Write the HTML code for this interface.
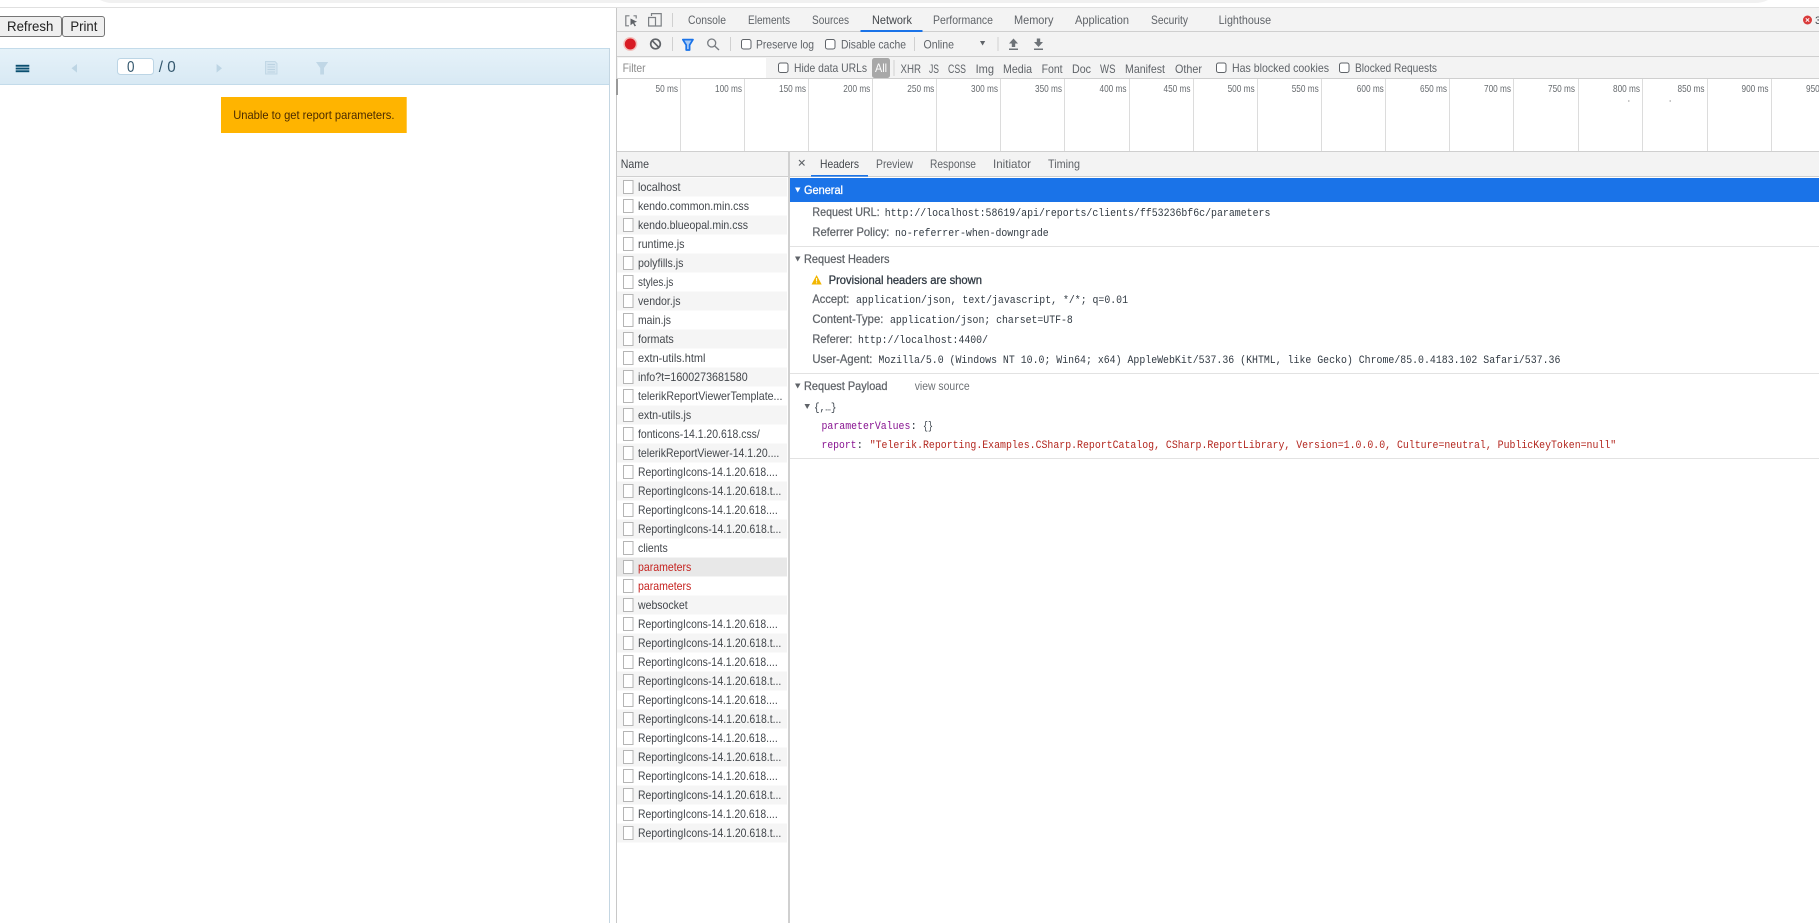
<!DOCTYPE html>
<html>
<head>
<meta charset="utf-8">
<title>Report Viewer</title>
<style>
html,body{margin:0;padding:0;background:#fff;width:1819px;height:923px;overflow:hidden}
svg{display:block;position:absolute;left:0;top:0}
text{font-family:"Liberation Sans",Arial,sans-serif;font-size:12px;fill:#5f6368;white-space:pre}
.d{fill:#43474c}
.l{fill:#5f6368;stroke:#5f6368;stroke-width:.25px;font-size:12px}
.m{font-family:"Liberation Mono",monospace;font-size:11px;fill:#303942}
.t{font-size:10.5px;fill:#666a6e}
.r{fill:#c5221f}
.p{font-family:"Liberation Mono",monospace;font-size:11px;fill:#881391}
.s{font-family:"Liberation Mono",monospace;font-size:11px;fill:#b3261e}
.cb{fill:#fff;stroke:#5f6368;stroke-width:1}
.ic{fill:#fff;stroke:#b5b5b5;stroke-width:1}
.g{stroke:#dcdcdc;stroke-width:1}
.dv{stroke:#d0d0d0;stroke-width:1}
</style>
</head>
<body>
<svg width="1819" height="923" viewBox="0 0 1819 923" xmlns="http://www.w3.org/2000/svg">
<defs>
<linearGradient id="tb" x1="0" y1="0" x2="0" y2="1"><stop offset="0" stop-color="#e6f2f9"/><stop offset="1" stop-color="#d8e9f4"/></linearGradient>
</defs>
<rect width="1819" height="923" fill="#fff"/>
<path d="M100 0 Q106 3 112 3 L1755 3 Q1762 3 1768 0 Z" fill="#f1f1f1"/>
<rect x="0" y="7" width="1819" height="1" fill="#e0e0e0"/>

<!-- left page -->
<rect x="-3" y="16.5" width="64.5" height="20" rx="2.5" fill="#efefef" stroke="#767676"/>
<rect x="62.5" y="16.5" width="42" height="20" rx="2.5" fill="#efefef" stroke="#767676"/>
<text x="7" y="31" textLength="46.4" lengthAdjust="spacingAndGlyphs" style="font-size:14px;fill:#222">Refresh</text>
<text x="70.4" y="31" textLength="27" lengthAdjust="spacingAndGlyphs" style="font-size:14px;fill:#222">Print</text>

<rect x="0" y="48" width="609" height="37" fill="url(#tb)"/>
<rect x="0" y="48" width="609" height="1" fill="#c3dbea"/>
<rect x="0" y="84" width="609" height="1" fill="#c3dbea"/>
<rect x="609" y="48" width="1" height="875" fill="#c4d6e2"/>
<rect x="15.7" y="64.8" width="13.6" height="1.9" fill="#0a4f70"/>
<rect x="15.7" y="67.6" width="13.6" height="1.9" fill="#0a4f70"/>
<rect x="15.7" y="70.3" width="13.6" height="1.9" fill="#0a4f70"/>
<path d="M77 64 L71.5 68.3 L77 72.6 Z" fill="#bdd5e4"/>
<rect x="117.5" y="58.5" width="36" height="16" rx="3" fill="#fff" stroke="#bcd5e5"/>
<text x="127" y="72" textLength="7.5" lengthAdjust="spacingAndGlyphs" style="font-size:16px;fill:#34586e">0</text>
<text x="158.8" y="72" textLength="17" lengthAdjust="spacingAndGlyphs" style="font-size:16px;fill:#34586e">/ 0</text>
<path d="M216.6 64 L222 68.3 L216.6 72.6 Z" fill="#bdd5e4"/>
<path d="M265.5 61.5 H275 L277 63.5 V74 H265.5 Z" fill="#d4e5f0" stroke="#c2d8e6"/>
<path d="M267.5 64.5 H275 M267.5 67 H275 M267.5 69.5 H275 M267.5 72 H275" stroke="#bcd3e2" fill="none"/>
<path d="M316 62 H328.2 L324 68 V74.5 H320.2 V68 Z" fill="#c0d7e6"/>

<rect x="221" y="97" width="185.7" height="36" fill="#ffb400"/>
<text x="233.2" y="119" textLength="161.3" lengthAdjust="spacingAndGlyphs" style="font-size:12px;fill:#4a2b00">Unable to get report parameters.</text>

<!-- devtools chrome -->
<rect x="616" y="8" width="1203" height="143.5" fill="#f3f3f3"/>
<rect x="616" y="8" width="1" height="915" fill="#c8c8c8"/>
<rect x="617" y="31" width="1202" height="1" fill="#cfcfcf"/>
<rect x="617" y="56" width="1202" height="1" fill="#cfcfcf"/>
<rect x="617" y="78" width="1202" height="1" fill="#cfcfcf"/>
<rect x="617" y="79" width="1202" height="72" fill="#fff"/>
<rect x="617" y="151" width="1202" height="1" fill="#cfcfcf"/>

<!-- tab bar icons -->
<path d="M629.5 15.8 H625.8 V25.8 H629 M633.5 15.8 H636.2 V18.5" fill="none" stroke="#7c8084" stroke-width="1.2"/>
<path d="M630.5 18.5 L637 21.8 L634.2 22.8 L636 25.8 L634.6 26.4 L633 23.4 L630.5 25.2 Z" fill="#5f6368"/>
<path d="M651.5 16 V13.6 H661.2 V26 H648.6 V17.5 H655.5 V26" fill="none" stroke="#7c8084" stroke-width="1.2"/>
<line x1="672.5" y1="13" x2="672.5" y2="27" class="dv"/>
<text x="688" y="24" textLength="38" lengthAdjust="spacingAndGlyphs">Console</text>
<text x="748" y="24" textLength="42" lengthAdjust="spacingAndGlyphs">Elements</text>
<text x="812" y="24" textLength="37" lengthAdjust="spacingAndGlyphs">Sources</text>
<text x="872" y="24" textLength="40" lengthAdjust="spacingAndGlyphs" class="d">Network</text>
<text x="933" y="24" textLength="60" lengthAdjust="spacingAndGlyphs">Performance</text>
<text x="1014" y="24" textLength="39.5" lengthAdjust="spacingAndGlyphs">Memory</text>
<text x="1075" y="24" textLength="54" lengthAdjust="spacingAndGlyphs">Application</text>
<text x="1151" y="24" textLength="37" lengthAdjust="spacingAndGlyphs">Security</text>
<text x="1218.6" y="24" textLength="52.5" lengthAdjust="spacingAndGlyphs">Lighthouse</text>
<rect x="860.5" y="30" width="62" height="2" fill="#1a73e8"/>
<circle cx="1807.5" cy="20" r="4.5" fill="#d93a3a"/>
<path d="M1805.8 18.3 L1809.2 21.7 M1809.2 18.3 L1805.8 21.7" stroke="#fff" stroke-width="1"/>
<text x="1815" y="24" class="d" style="font-size:11px">3</text>

<!-- network toolbar -->
<circle cx="630.3" cy="44" r="7" fill="#f3c0bc"/>
<circle cx="630.3" cy="44" r="5.5" fill="#d81b24"/>
<circle cx="655.5" cy="44" r="4.8" fill="none" stroke="#5f6368" stroke-width="1.7"/>
<line x1="652.2" y1="40.7" x2="658.8" y2="47.3" stroke="#5f6368" stroke-width="1.7"/>
<line x1="672.5" y1="37" x2="672.5" y2="51" class="dv"/>
<path d="M682.8 39.6 H693 L689.6 45 V50 H686.2 V45 Z" fill="#a9cbf5" stroke="#1a73e8" stroke-width="1.7" stroke-linejoin="round"/>
<circle cx="711.7" cy="43" r="4" fill="none" stroke="#777b80" stroke-width="1.3"/>
<line x1="714.7" y1="46" x2="719" y2="50" stroke="#777b80" stroke-width="1.4"/>
<line x1="730.5" y1="37" x2="730.5" y2="51" class="dv"/>
<rect x="741.5" y="39.5" width="9.5" height="9.5" rx="2" class="cb"/>
<text x="756" y="48.5" textLength="58" lengthAdjust="spacingAndGlyphs">Preserve log</text>
<rect x="825.5" y="39.5" width="9.5" height="9.5" rx="2" class="cb"/>
<text x="841" y="48.5" textLength="65" lengthAdjust="spacingAndGlyphs">Disable cache</text>
<line x1="914.5" y1="37" x2="914.5" y2="51" class="dv"/>
<text x="923.5" y="48.5" textLength="30.5" lengthAdjust="spacingAndGlyphs">Online</text>
<path d="M980 41 H985.2 L982.6 45.5 Z" fill="#5f6368"/>
<line x1="998" y1="37" x2="998" y2="51" class="dv"/>
<path d="M1013.5 38.5 L1018 43.5 H1015.2 V47 H1011.8 V43.5 H1009 Z M1009 48.5 H1018 V50 H1009 Z" fill="#6e7378"/>
<path d="M1038.5 47 L1043 42 H1040.2 V38.5 H1036.8 V42 H1034 Z M1034 48.5 H1043 V50 H1034 Z" fill="#6e7378"/>

<!-- filter bar -->
<rect x="618" y="58" width="148" height="20" fill="#fff"/>
<text x="622.6" y="72" textLength="23" lengthAdjust="spacingAndGlyphs" style="fill:#8a8a8a">Filter</text>
<rect x="778.5" y="63" width="9.5" height="9.5" rx="2" class="cb"/>
<text x="794" y="72" textLength="73" lengthAdjust="spacingAndGlyphs">Hide data URLs</text>
<rect x="872" y="58" width="18" height="20" rx="2.5" fill="#a8a8a8"/>
<text x="875" y="72" textLength="12" lengthAdjust="spacingAndGlyphs" style="fill:#fff">All</text>
<line x1="894" y1="60" x2="894" y2="76" class="dv"/>
<text x="900.5" y="73" textLength="20.5" lengthAdjust="spacingAndGlyphs">XHR</text>
<text x="929" y="73" textLength="10" lengthAdjust="spacingAndGlyphs">JS</text>
<text x="948" y="73" textLength="18" lengthAdjust="spacingAndGlyphs">CSS</text>
<text x="975.6" y="73" textLength="18.4" lengthAdjust="spacingAndGlyphs">Img</text>
<text x="1003" y="73" textLength="29" lengthAdjust="spacingAndGlyphs">Media</text>
<text x="1041.6" y="73" textLength="21" lengthAdjust="spacingAndGlyphs">Font</text>
<text x="1072" y="73" textLength="19" lengthAdjust="spacingAndGlyphs">Doc</text>
<text x="1100" y="73" textLength="15.5" lengthAdjust="spacingAndGlyphs">WS</text>
<text x="1125" y="73" textLength="40" lengthAdjust="spacingAndGlyphs">Manifest</text>
<text x="1175" y="73" textLength="27" lengthAdjust="spacingAndGlyphs">Other</text>
<rect x="1216.5" y="63" width="9.5" height="9.5" rx="2" class="cb"/>
<text x="1232" y="72" textLength="97" lengthAdjust="spacingAndGlyphs">Has blocked cookies</text>
<rect x="1339.5" y="63" width="9.5" height="9.5" rx="2" class="cb"/>
<text x="1355" y="72" textLength="82" lengthAdjust="spacingAndGlyphs">Blocked Requests</text>

<!-- timeline -->
<rect x="616" y="79" width="2" height="16" fill="#9a9a9a"/>
<g>
<line x1="680.5" y1="79" x2="680.5" y2="151" class="g"/><line x1="744.5" y1="79" x2="744.5" y2="151" class="g"/>
<line x1="808.5" y1="79" x2="808.5" y2="151" class="g"/><line x1="872.5" y1="79" x2="872.5" y2="151" class="g"/>
<line x1="936.5" y1="79" x2="936.5" y2="151" class="g"/><line x1="1000.5" y1="79" x2="1000.5" y2="151" class="g"/>
<line x1="1064.5" y1="79" x2="1064.5" y2="151" class="g"/><line x1="1129.5" y1="79" x2="1129.5" y2="151" class="g"/>
<line x1="1193.5" y1="79" x2="1193.5" y2="151" class="g"/><line x1="1257.5" y1="79" x2="1257.5" y2="151" class="g"/>
<line x1="1321.5" y1="79" x2="1321.5" y2="151" class="g"/><line x1="1385.5" y1="79" x2="1385.5" y2="151" class="g"/>
<line x1="1449.5" y1="79" x2="1449.5" y2="151" class="g"/><line x1="1513.5" y1="79" x2="1513.5" y2="151" class="g"/>
<line x1="1578.5" y1="79" x2="1578.5" y2="151" class="g"/><line x1="1642.5" y1="79" x2="1642.5" y2="151" class="g"/>
<line x1="1707.5" y1="79" x2="1707.5" y2="151" class="g"/><line x1="1771.5" y1="79" x2="1771.5" y2="151" class="g"/>
</g>
<text class="t" x="655.5" y="92" textLength="22.5" lengthAdjust="spacingAndGlyphs">50 ms</text>
<text class="t" x="715" y="92" textLength="27" lengthAdjust="spacingAndGlyphs">100 ms</text>
<text class="t" x="779" y="92" textLength="27" lengthAdjust="spacingAndGlyphs">150 ms</text>
<text class="t" x="843.3" y="92" textLength="27" lengthAdjust="spacingAndGlyphs">200 ms</text>
<text class="t" x="907.3" y="92" textLength="27" lengthAdjust="spacingAndGlyphs">250 ms</text>
<text class="t" x="971" y="92" textLength="27" lengthAdjust="spacingAndGlyphs">300 ms</text>
<text class="t" x="1035" y="92" textLength="27" lengthAdjust="spacingAndGlyphs">350 ms</text>
<text class="t" x="1099.5" y="92" textLength="27" lengthAdjust="spacingAndGlyphs">400 ms</text>
<text class="t" x="1163.5" y="92" textLength="27" lengthAdjust="spacingAndGlyphs">450 ms</text>
<text class="t" x="1227.6" y="92" textLength="27" lengthAdjust="spacingAndGlyphs">500 ms</text>
<text class="t" x="1291.7" y="92" textLength="27" lengthAdjust="spacingAndGlyphs">550 ms</text>
<text class="t" x="1356.8" y="92" textLength="27" lengthAdjust="spacingAndGlyphs">600 ms</text>
<text class="t" x="1420" y="92" textLength="27" lengthAdjust="spacingAndGlyphs">650 ms</text>
<text class="t" x="1484" y="92" textLength="27" lengthAdjust="spacingAndGlyphs">700 ms</text>
<text class="t" x="1548" y="92" textLength="27" lengthAdjust="spacingAndGlyphs">750 ms</text>
<text class="t" x="1613" y="92" textLength="27" lengthAdjust="spacingAndGlyphs">800 ms</text>
<text class="t" x="1677.5" y="92" textLength="27" lengthAdjust="spacingAndGlyphs">850 ms</text>
<text class="t" x="1741.5" y="92" textLength="27" lengthAdjust="spacingAndGlyphs">900 ms</text>
<text class="t" x="1806" y="92" textLength="27" lengthAdjust="spacingAndGlyphs">950 ms</text>
<rect x="1628" y="100" width="1.5" height="2" fill="#c8c8c8"/>
<rect x="1669.5" y="100" width="1.5" height="2" fill="#c8c8c8"/>

<!-- panels header -->
<rect x="617" y="152" width="1202" height="24.5" fill="#f3f3f3"/>
<rect x="617" y="176" width="1202" height="1" fill="#cfcfcf"/>
<rect x="788" y="151" width="2" height="772" fill="#d0d0d0"/>
<text x="620.7" y="168" textLength="28.3" lengthAdjust="spacingAndGlyphs" class="d">Name</text>
<path d="M799 160 L804.5 165.5 M804.5 160 L799 165.5" stroke="#5f6368" stroke-width="1.2"/>
<text x="820" y="168" textLength="39" lengthAdjust="spacingAndGlyphs" class="d">Headers</text>
<text x="876" y="168" textLength="37" lengthAdjust="spacingAndGlyphs">Preview</text>
<text x="930" y="168" textLength="46" lengthAdjust="spacingAndGlyphs">Response</text>
<text x="993" y="168" textLength="38" lengthAdjust="spacingAndGlyphs">Initiator</text>
<text x="1048" y="168" textLength="32" lengthAdjust="spacingAndGlyphs">Timing</text>
<rect x="811" y="175" width="57" height="1.6" fill="#1a73e8"/>

<!-- request rows backgrounds -->
<g fill="#f5f5f5">
<rect x="617" y="177.5" width="170" height="19"/><rect x="617" y="215.5" width="170" height="19"/>
<rect x="617" y="253.5" width="170" height="19"/><rect x="617" y="291.5" width="170" height="19"/>
<rect x="617" y="329.5" width="170" height="19"/><rect x="617" y="367.5" width="170" height="19"/>
<rect x="617" y="405.5" width="170" height="19"/><rect x="617" y="443.5" width="170" height="19"/>
<rect x="617" y="481.5" width="170" height="19"/><rect x="617" y="519.5" width="170" height="19"/>
<rect x="617" y="557.5" width="170" height="19" fill="#e8e8e8"/><rect x="617" y="595.5" width="170" height="19"/>
<rect x="617" y="633.5" width="170" height="19"/><rect x="617" y="671.5" width="170" height="19"/>
<rect x="617" y="709.5" width="170" height="19"/><rect x="617" y="747.5" width="170" height="19"/>
<rect x="617" y="785.5" width="170" height="19"/><rect x="617" y="823.5" width="170" height="19"/>
</g>
<!-- file icons -->
<g class="ic">
<rect x="623.5" y="180.5" width="9.5" height="13"/><rect x="623.5" y="199.5" width="9.5" height="13"/>
<rect x="623.5" y="218.5" width="9.5" height="13"/><rect x="623.5" y="237.5" width="9.5" height="13"/>
<rect x="623.5" y="256.5" width="9.5" height="13"/><rect x="623.5" y="275.5" width="9.5" height="13"/>
<rect x="623.5" y="294.5" width="9.5" height="13"/><rect x="623.5" y="313.5" width="9.5" height="13"/>
<rect x="623.5" y="332.5" width="9.5" height="13"/><rect x="623.5" y="351.5" width="9.5" height="13"/>
<rect x="623.5" y="370.5" width="9.5" height="13"/><rect x="623.5" y="389.5" width="9.5" height="13"/>
<rect x="623.5" y="408.5" width="9.5" height="13"/><rect x="623.5" y="427.5" width="9.5" height="13"/>
<rect x="623.5" y="446.5" width="9.5" height="13"/><rect x="623.5" y="465.5" width="9.5" height="13"/>
<rect x="623.5" y="484.5" width="9.5" height="13"/><rect x="623.5" y="503.5" width="9.5" height="13"/>
<rect x="623.5" y="522.5" width="9.5" height="13"/><rect x="623.5" y="541.5" width="9.5" height="13"/>
<rect x="623.5" y="560.5" width="9.5" height="13"/><rect x="623.5" y="579.5" width="9.5" height="13"/>
<rect x="623.5" y="598.5" width="9.5" height="13"/><rect x="623.5" y="617.5" width="9.5" height="13"/>
<rect x="623.5" y="636.5" width="9.5" height="13"/><rect x="623.5" y="655.5" width="9.5" height="13"/>
<rect x="623.5" y="674.5" width="9.5" height="13"/><rect x="623.5" y="693.5" width="9.5" height="13"/>
<rect x="623.5" y="712.5" width="9.5" height="13"/><rect x="623.5" y="731.5" width="9.5" height="13"/>
<rect x="623.5" y="750.5" width="9.5" height="13"/><rect x="623.5" y="769.5" width="9.5" height="13"/>
<rect x="623.5" y="788.5" width="9.5" height="13"/><rect x="623.5" y="807.5" width="9.5" height="13"/>
<rect x="623.5" y="826.5" width="9.5" height="13"/>
</g>
<!-- row text -->
<g class="rows">
<text class="d" x="638" y="191" textLength="42.5" lengthAdjust="spacingAndGlyphs">localhost</text>
<text class="d" x="638" y="210" textLength="111" lengthAdjust="spacingAndGlyphs">kendo.common.min.css</text>
<text class="d" x="638" y="229" textLength="110" lengthAdjust="spacingAndGlyphs">kendo.blueopal.min.css</text>
<text class="d" x="638" y="248" textLength="46.5" lengthAdjust="spacingAndGlyphs">runtime.js</text>
<text class="d" x="638" y="267" textLength="45.5" lengthAdjust="spacingAndGlyphs">polyfills.js</text>
<text class="d" x="638" y="286" textLength="35.3" lengthAdjust="spacingAndGlyphs">styles.js</text>
<text class="d" x="638" y="305" textLength="42.5" lengthAdjust="spacingAndGlyphs">vendor.js</text>
<text class="d" x="638" y="324" textLength="33" lengthAdjust="spacingAndGlyphs">main.js</text>
<text class="d" x="638" y="343" textLength="35.8" lengthAdjust="spacingAndGlyphs">formats</text>
<text class="d" x="638" y="362" textLength="67.4" lengthAdjust="spacingAndGlyphs">extn-utils.html</text>
<text class="d" x="638" y="381" textLength="109.7" lengthAdjust="spacingAndGlyphs">info?t=1600273681580</text>
<text class="d" x="638" y="400" textLength="144.4" lengthAdjust="spacingAndGlyphs">telerikReportViewerTemplate...</text>
<text class="d" x="638" y="419" textLength="53.2" lengthAdjust="spacingAndGlyphs">extn-utils.js</text>
<text class="d" x="638" y="438" textLength="121.8" lengthAdjust="spacingAndGlyphs">fonticons-14.1.20.618.css/</text>
<text class="d" x="638" y="457" textLength="141.3" lengthAdjust="spacingAndGlyphs">telerikReportViewer-14.1.20....</text>
<text class="d" x="638" y="476" textLength="139.7" lengthAdjust="spacingAndGlyphs">ReportingIcons-14.1.20.618....</text>
<text class="d" x="638" y="495" textLength="143.3" lengthAdjust="spacingAndGlyphs">ReportingIcons-14.1.20.618.t...</text>
<text class="d" x="638" y="514" textLength="139.7" lengthAdjust="spacingAndGlyphs">ReportingIcons-14.1.20.618....</text>
<text class="d" x="638" y="533" textLength="143.3" lengthAdjust="spacingAndGlyphs">ReportingIcons-14.1.20.618.t...</text>
<text class="d" x="638" y="552" textLength="29.7" lengthAdjust="spacingAndGlyphs">clients</text>
<text class="r" x="638" y="571" textLength="53.3" lengthAdjust="spacingAndGlyphs">parameters</text>
<text class="r" x="638" y="590" textLength="53.3" lengthAdjust="spacingAndGlyphs">parameters</text>
<text class="d" x="638" y="609" textLength="49.7" lengthAdjust="spacingAndGlyphs">websocket</text>
<text class="d" x="638" y="628" textLength="139.7" lengthAdjust="spacingAndGlyphs">ReportingIcons-14.1.20.618....</text>
<text class="d" x="638" y="647" textLength="143.3" lengthAdjust="spacingAndGlyphs">ReportingIcons-14.1.20.618.t...</text>
<text class="d" x="638" y="666" textLength="139.7" lengthAdjust="spacingAndGlyphs">ReportingIcons-14.1.20.618....</text>
<text class="d" x="638" y="685" textLength="143.3" lengthAdjust="spacingAndGlyphs">ReportingIcons-14.1.20.618.t...</text>
<text class="d" x="638" y="704" textLength="139.7" lengthAdjust="spacingAndGlyphs">ReportingIcons-14.1.20.618....</text>
<text class="d" x="638" y="723" textLength="143.3" lengthAdjust="spacingAndGlyphs">ReportingIcons-14.1.20.618.t...</text>
<text class="d" x="638" y="742" textLength="139.7" lengthAdjust="spacingAndGlyphs">ReportingIcons-14.1.20.618....</text>
<text class="d" x="638" y="761" textLength="143.3" lengthAdjust="spacingAndGlyphs">ReportingIcons-14.1.20.618.t...</text>
<text class="d" x="638" y="780" textLength="139.7" lengthAdjust="spacingAndGlyphs">ReportingIcons-14.1.20.618....</text>
<text class="d" x="638" y="799" textLength="143.3" lengthAdjust="spacingAndGlyphs">ReportingIcons-14.1.20.618.t...</text>
<text class="d" x="638" y="818" textLength="139.7" lengthAdjust="spacingAndGlyphs">ReportingIcons-14.1.20.618....</text>
<text class="d" x="638" y="837" textLength="143.3" lengthAdjust="spacingAndGlyphs">ReportingIcons-14.1.20.618.t...</text>
</g>

<!-- details -->
<rect x="790" y="178" width="1029" height="24" fill="#1a73e8"/>
<path d="M795 187.5 H800.5 L797.7 192.5 Z" fill="#fff"/>
<text x="804" y="194" textLength="39" lengthAdjust="spacingAndGlyphs" style="fill:#fff;stroke:#fff;stroke-width:.3px;font-size:12px">General</text>

<text class="l" x="812.4" y="216" textLength="67.2" lengthAdjust="spacingAndGlyphs">Request URL:</text>
<text class="m" x="884.7" y="216" textLength="385.7" lengthAdjust="spacingAndGlyphs">http://localhost:58619/api/reports/clients/ff53236bf6c/parameters</text>
<text class="l" x="812.4" y="236" textLength="77" lengthAdjust="spacingAndGlyphs">Referrer Policy:</text>
<text class="m" x="895" y="236" textLength="153.7" lengthAdjust="spacingAndGlyphs">no-referrer-when-downgrade</text>
<rect x="790" y="246" width="1029" height="1" fill="#e2e2e2"/>

<path d="M795 256.5 H800.5 L797.7 261.5 Z" fill="#5f6368"/>
<text class="l" x="804" y="263" textLength="85.5" lengthAdjust="spacingAndGlyphs">Request Headers</text>
<path d="M816.6 275 L821.7 284.5 H811.5 Z" fill="#f2b600"/>
<rect x="816.1" y="278" width="1" height="3.5" fill="#fff"/>
<rect x="816.1" y="282.3" width="1" height="1" fill="#fff"/>
<text x="828.6" y="284" textLength="153.4" lengthAdjust="spacingAndGlyphs" style="stroke:#303942;stroke-width:.3px;font-size:12px;fill:#303942">Provisional headers are shown</text>
<text class="l" x="812.4" y="303" textLength="37" lengthAdjust="spacingAndGlyphs">Accept:</text>
<text class="m" x="856" y="303" textLength="272" lengthAdjust="spacingAndGlyphs">application/json, text/javascript, */*; q=0.01</text>
<text class="l" x="812.4" y="323" textLength="71" lengthAdjust="spacingAndGlyphs">Content-Type:</text>
<text class="m" x="890" y="323" textLength="182.8" lengthAdjust="spacingAndGlyphs">application/json; charset=UTF-8</text>
<text class="l" x="812.4" y="343" textLength="40" lengthAdjust="spacingAndGlyphs">Referer:</text>
<text class="m" x="858" y="343" textLength="130" lengthAdjust="spacingAndGlyphs">http://localhost:4400/</text>
<text class="l" x="812.4" y="363" textLength="60" lengthAdjust="spacingAndGlyphs">User-Agent:</text>
<text class="m" x="878.4" y="363" textLength="682" lengthAdjust="spacingAndGlyphs">Mozilla/5.0 (Windows NT 10.0; Win64; x64) AppleWebKit/537.36 (KHTML, like Gecko) Chrome/85.0.4183.102 Safari/537.36</text>
<rect x="790" y="373" width="1029" height="1" fill="#e2e2e2"/>

<path d="M795 383.5 H800.5 L797.7 388.5 Z" fill="#5f6368"/>
<text class="l" x="804" y="390" textLength="83.5" lengthAdjust="spacingAndGlyphs">Request Payload</text>
<text x="914.7" y="390" textLength="55" lengthAdjust="spacingAndGlyphs" style="font-size:11.5px;fill:#6e7276">view source</text>
<path d="M804.5 404 H810 L807.2 409 Z" fill="#5f6368"/>
<text class="m" x="814" y="410.5" textLength="22.5" lengthAdjust="spacingAndGlyphs">{,…}</text>
<text class="p" x="821.5" y="429" textLength="88.9" lengthAdjust="spacingAndGlyphs">parameterValues</text>
<text class="m" x="910.4" y="429">:</text>
<text class="m" x="923" y="429" textLength="10" lengthAdjust="spacingAndGlyphs">{}</text>
<text class="p" x="821.5" y="448" textLength="35" lengthAdjust="spacingAndGlyphs">report</text>
<text class="m" x="856.5" y="448">:</text>
<text class="s" x="869.7" y="448" textLength="746.5" lengthAdjust="spacingAndGlyphs">"Telerik.Reporting.Examples.CSharp.ReportCatalog, CSharp.ReportLibrary, Version=1.0.0.0, Culture=neutral, PublicKeyToken=null"</text>
<rect x="790" y="458" width="1029" height="1" fill="#e2e2e2"/>
</svg>
</body>
</html>
